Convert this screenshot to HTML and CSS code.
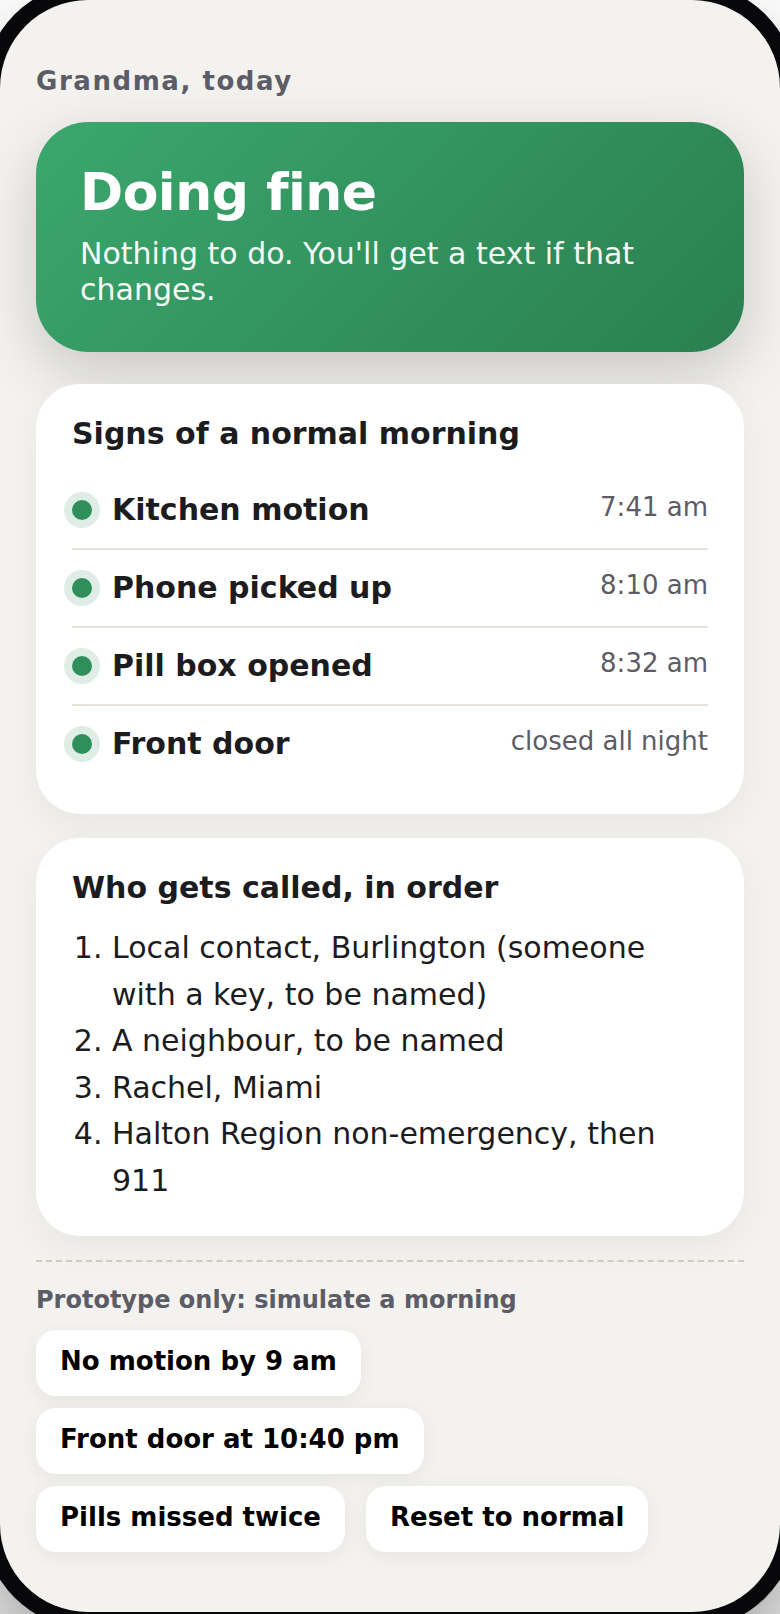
FILE: index.html
```html
<!DOCTYPE html>
<html lang="en">
<head>
<meta charset="utf-8">
<meta name="viewport" content="width=device-width, initial-scale=1">
<title>Grandma, today</title>
<link rel="stylesheet" href="styles.css">
</head>
<body>
<main class="phone">
  <p class="eyebrow">Grandma, today</p>

  <section class="status">
    <h1 class="status-title">Doing fine</h1>
    <p class="status-text">Nothing to do. You'll get a text if that changes.</p>
  </section>

  <section class="card">
    <h2 class="card-title">Signs of a normal morning</h2>
    <ul class="signs">
      <li class="sign"><span class="dot"></span><span class="sign-name">Kitchen motion</span><span class="sign-time">7:41 am</span></li>
      <li class="sign"><span class="dot"></span><span class="sign-name">Phone picked up</span><span class="sign-time">8:10 am</span></li>
      <li class="sign"><span class="dot"></span><span class="sign-name">Pill box opened</span><span class="sign-time">8:32 am</span></li>
      <li class="sign"><span class="dot"></span><span class="sign-name">Front door</span><span class="sign-time">closed all night</span></li>
    </ul>
  </section>

  <section class="card">
    <h2 class="card-title">Who gets called, in order</h2>
    <ol class="contacts">
      <li>Local contact, Burlington (someone with a key, to be named)</li>
      <li>A neighbour, to be named</li>
      <li>Rachel, Miami</li>
      <li>Halton Region non-emergency, then 911</li>
    </ol>
  </section>

  <section class="simulate">
    <h2 class="simulate-title">Prototype only: simulate a morning</h2>
    <div class="simulate-actions">
      <button class="chip" type="button">No motion by 9 am</button>
      <button class="chip" type="button">Front door at 10:40 pm</button>
      <button class="chip" type="button">Pills missed twice</button>
      <button class="chip" type="button">Reset to normal</button>
    </div>
  </section>
</main>
</body>
</html>
```
FILE: styles.css
```css
* {
  box-sizing: border-box;
}

body {
  margin: 0;
  background: #fff;
  color: #1c1c1f;
  font-family: "DejaVu Sans", sans-serif;
  font-size: 30px;
  padding-bottom: 2px;
  overflow-x: hidden;
}

h1, h2, p, ul, ol {
  margin: 0;
  padding: 0;
}

.phone {
  padding: 64px 36px 60px;
  background: #f3f2ee;
  border-radius: 88px;
  box-shadow: 0 0 0 16px #08080a, 0 60px 120px rgba(0, 0, 0, 0.5);
}

.eyebrow {
  margin-bottom: 24px;
  color: #5c5c66;
  font-size: 26px;
  font-weight: 700;
  line-height: 34px;
  letter-spacing: 0.06em;
}

.status {
  margin-bottom: 32px;
  padding: 44px;
  border-radius: 52px;
  background: linear-gradient(135deg, #3ba76d, #2a7f50);
  box-shadow: 0 20px 60px rgba(0, 0, 0, 0.18);
  color: #fff;
}

.status-title {
  margin-bottom: 18px;
  font-size: 52px;
  line-height: 52px;
  letter-spacing: -0.01em;
}

.status-text {
  line-height: 36px;
  opacity: 0.95;
}

.card {
  margin-bottom: 24px;
  padding: 32px 36px;
  border-radius: 44px;
  background: #fff;
  box-shadow: 0 12px 36px rgba(0, 0, 0, 0.05);
}

.card-title {
  font-size: 30px;
  line-height: 35px;
}

.signs {
  margin-top: 21px;
  list-style: none;
}

.sign {
  display: flex;
  align-items: flex-start;
  gap: 20px;
  padding: 17px 0;
  border-bottom: 2px solid #e7e3dc;
}

.sign:last-child {
  border-bottom: 0;
}

.dot {
  align-self: center;
  width: 20px;
  height: 20px;
  border-radius: 50%;
  background: #2e8f5b;
  box-shadow: 0 0 0 8px #e0ede6;
}

.sign-name {
  flex: 1;
  font-weight: 700;
  line-height: 42px;
}

.sign-time {
  color: #5c5c66;
  font-size: 26px;
  line-height: 36px;
}

.contacts {
  margin-top: 20px;
  padding-left: 40px;
  line-height: 1.55;
}

.simulate {
  padding-top: 24px;
  border-top: 2px dashed #cfcabf;
}

.simulate-title {
  margin-bottom: 16px;
  color: #5c5c66;
  font-size: 24px;
  line-height: 28px;
}

.simulate-actions {
  display: flex;
  flex-wrap: wrap;
  gap: 12px 21px;
}

.chip {
  padding: 16px 24px 20px;
  border: 0;
  border-radius: 20px;
  background: #fff;
  box-shadow: 0 4px 20px rgba(0, 0, 0, 0.06);
  color: #000;
  font: 700 26px/30px "DejaVu Sans", sans-serif;
}
```
